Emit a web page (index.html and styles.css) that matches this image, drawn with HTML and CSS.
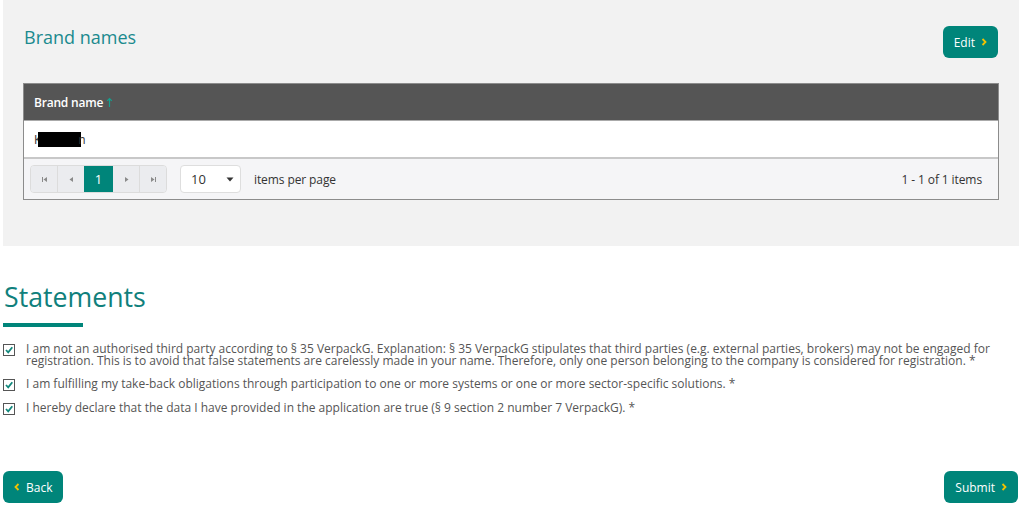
FILE: index.html
```html
<!DOCTYPE html>
<html lang="en">
	<head>
		<meta charset="utf-8">
		<title>Brand names</title>
		<link rel="stylesheet" href="styles.css">
	</head>
	<body>

		<div class="panel">
			<div class="panelHead">
				<h2 class="panelTitle">Brand names</h2>
				<a class="btn">Edit
					<svg class="chev" width="6" height="8" viewBox="0 0 6 8"><polyline points="1.5,1 4.5,4 1.5,7" fill="none" stroke="#f2c200" stroke-width="1.8"/></svg>
				</a>
			</div>

			<div class="grid">
				<div class="gridHead">
					Brand name
					<svg class="sortArrow" width="7" height="11" viewBox="0 0 7 11"><path d="M3.5 1.5 L3.5 10 M1.2 3.8 L3.5 1.5 L5.8 3.8" fill="none" stroke="#14a08f" stroke-width="1.2"/></svg>
				</div>
				<div class="gridRow">K<span class="redact"></span>n</div>
				<div class="pager">
					<div class="pagerNav">
						<span class="pg"><svg width="7" height="7" viewBox="0 0 7 7"><path d="M1 1h1v5H1z M6 1v5L2.5 3.5z" fill="#8a8a8a"/></svg></span>
						<span class="pg"><svg width="7" height="7" viewBox="0 0 7 7"><path d="M5 1v5L1.5 3.5z" fill="#8a8a8a"/></svg></span>
						<span class="pg pgActive">1</span>
						<span class="pg"><svg width="7" height="7" viewBox="0 0 7 7"><path d="M2 1v5l3.5-2.5z" fill="#8a8a8a"/></svg></span>
						<span class="pg"><svg width="7" height="7" viewBox="0 0 7 7"><path d="M1 1v5l3.5-2.5z M5 1h1v5H5z" fill="#8a8a8a"/></svg></span>
					</div>
					<div class="pageSize">
						<span>10</span>
						<svg width="8" height="5" viewBox="0 0 8 5"><path d="M0.5 0.5h7L4 4.5z" fill="#333"/></svg>
					</div>
					<span class="perPage">items per page</span>
					<span class="pagerInfo">1 - 1 of 1 items</span>
				</div>
			</div>
		</div>

		<div class="statements">
			<h1 class="stTitle">Statements</h1>
			<div class="stBar"></div>

			<div class="checks">
				<div class="check">
					<span class="box"><svg width="10" height="10" viewBox="0 0 10 10"><polyline points="2,5 4.2,7.3 8.3,2.2" fill="none" stroke="#12887c" stroke-width="1.8"/></svg></span>
					<span class="checkText">I am not an authorised third party according to § 35 VerpackG. Explanation: § 35 VerpackG stipulates that third parties (e.g. external parties, brokers) may not be engaged for registration. This is to avoid that false statements are carelessly made in your name. Therefore, only one person belonging to the company is considered for registration. *</span>
				</div>
				<div class="check">
					<span class="box"><svg width="10" height="10" viewBox="0 0 10 10"><polyline points="2,5 4.2,7.3 8.3,2.2" fill="none" stroke="#12887c" stroke-width="1.8"/></svg></span>
					<span class="checkText">I am fulfilling my take-back obligations through participation to one or more systems or one or more sector-specific solutions. *</span>
				</div>
				<div class="check">
					<span class="box"><svg width="10" height="10" viewBox="0 0 10 10"><polyline points="2,5 4.2,7.3 8.3,2.2" fill="none" stroke="#12887c" stroke-width="1.8"/></svg></span>
					<span class="checkText">I hereby declare that the data I have provided in the application are true (§ 9 section 2 number 7 VerpackG). *</span>
				</div>
			</div>

			<div class="actions">
				<a class="btn">
					<svg class="chev chevLeft" width="6" height="8" viewBox="0 0 6 8"><polyline points="4.5,1 1.5,4 4.5,7" fill="none" stroke="#f2c200" stroke-width="1.8"/></svg>
					Back
				</a>
				<a class="btn">Submit
					<svg class="chev" width="6" height="8" viewBox="0 0 6 8"><polyline points="1.5,1 4.5,4 1.5,7" fill="none" stroke="#f2c200" stroke-width="1.8"/></svg>
				</a>
			</div>
		</div>

	</body>
</html>
```

FILE: styles.css
```css
body{
	margin: 0;
	padding: 0;
	font-family: "Open Sans", "Liberation Sans", sans-serif;
	font-size: 12px;
	color: #444;
	background: #fff;
}

.panel{
	margin: 0 3px;
	padding: 26px 20px 46px 20px;
	background-color: #f2f2f2;
}

.panelHead{
	display: flex;
	justify-content: space-between;
	align-items: flex-start;
	margin-bottom: 25px;
}

.panelTitle{
	margin: 0 0 0 1px;
	font-size: 18px;
	font-weight: normal;
	line-height: 23px;
	color: #1b8a8e;
}

.btn{
	display: inline-flex;
	align-items: center;
	gap: 6px;
	height: 32px;
	padding: 0 11px;
	box-sizing: border-box;
	border-radius: 6px;
	background-color: #00857a;
	color: #fff;
	font-size: 12px;
	cursor: pointer;
}

.panelHead .btn{
	margin-right: 1px;
}

.chev{
	display: block;
}

.grid{
	border: 1px solid #8c8c8c;
}

.gridHead{
	display: flex;
	align-items: center;
	gap: 3px;
	height: 36px;
	padding-left: 10px;
	background-color: #555;
	color: #fff;
	font-weight: 600;
	letter-spacing: -0.2px;
	border-bottom: 1px solid #aaa;
}

.gridRow{
	height: 36px;
	line-height: 38px;
	padding-left: 10px;
	background: #fff;
	color: #333;
	border-bottom: 2px solid #c8c8c8;
}

.redact{
	display: inline-block;
	width: 43px;
	height: 15px;
	margin-left: -3px;
	margin-right: -3px;
	vertical-align: -3px;
	background: #000;
}

.pager{
	display: flex;
	align-items: center;
	height: 40px;
	padding: 0 16px 0 6px;
	background-color: #f5f5f7;
	color: #333;
}

.pagerNav{
	display: flex;
	height: 28px;
	border: 1px solid #dcdcdc;
	border-radius: 4px;
	overflow: hidden;
	box-sizing: border-box;
}

.pg{
	display: flex;
	align-items: center;
	justify-content: center;
	width: 26px;
	background-color: #ebecef;
	border-left: 1px solid #dcdcdc;
}

.pg:first-child{
	border-left: none;
}

.pgActive{
	width: 29px;
	background-color: #00857a;
	border-left: none;
	color: #fff;
	font-size: 13px;
}

.pgActive + .pg{
	border-left: none;
}

.pageSize{
	display: flex;
	align-items: center;
	justify-content: space-between;
	width: 61px;
	height: 28px;
	margin-left: 13px;
	padding: 0 6px 0 10px;
	box-sizing: border-box;
	background: #fff;
	border: 1px solid #dedede;
	border-radius: 4px;
	font-size: 13px;
	color: #333;
}

.perPage{
	margin-left: 13px;
	letter-spacing: -0.1px;
}

.pagerInfo{
	margin-left: auto;
	letter-spacing: -0.1px;
}

.statements{
	padding: 33px 3px 0 3px;
}

.stTitle{
	margin: 0 0 8px 1px;
	font-size: 26.7px;
	font-weight: normal;
	line-height: 36px;
	color: #10807c;
}

.stBar{
	width: 80px;
	height: 4px;
	background-color: #00857a;
	margin-bottom: 16px;
}

.check{
	display: flex;
	align-items: flex-start;
	margin-bottom: 11px;
}

.box{
	display: flex;
	align-items: center;
	justify-content: center;
	width: 12px;
	height: 12px;
	margin-top: 1px;
	box-sizing: border-box;
	border: 1px solid #555;
	background: #fff;
	flex-shrink: 0;
}

.checkText{
	margin-left: 11px;
	width: 975px;
	line-height: 12px;
	color: #555;
}

.actions{
	display: flex;
	justify-content: space-between;
	margin-top: 56px;
}

.actions .btn:last-child{
	margin-right: 1px;
}
```
